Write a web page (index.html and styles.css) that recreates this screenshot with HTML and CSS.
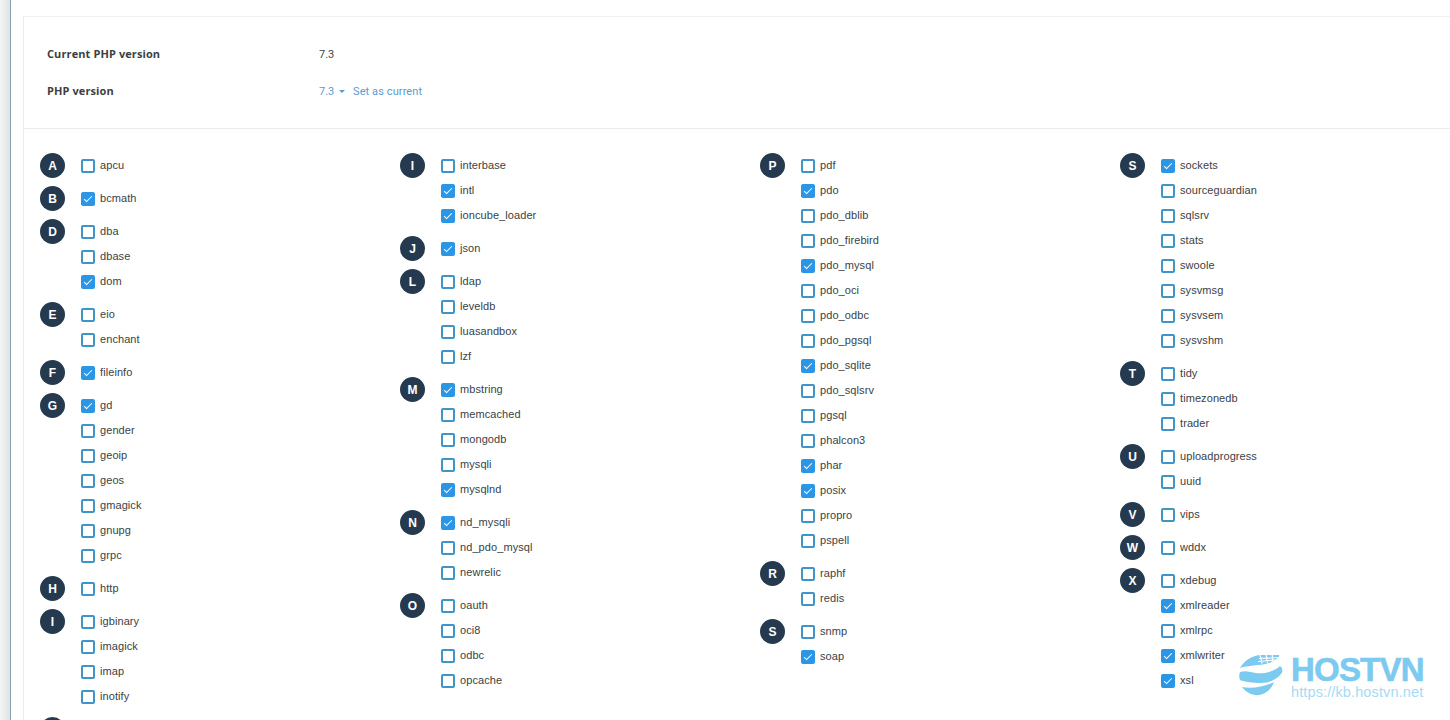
FILE: index.html
```html
<!DOCTYPE html>
<html lang="en">
<head>
<meta charset="UTF-8">
<title>Select PHP version</title>
<link rel="stylesheet" href="styles.css">
</head>
<body>
<div class="page">
  <div class="side-edge"></div>
  <div class="main">
    <div class="card">
      <div class="version-info">
        <div class="info-label">Current PHP version</div>
        <div class="info-value">7.3</div>
        <div class="info-label">PHP version</div>
        <div class="info-value link">7.3 <span class="caret"></span><span class="set-current">Set as current</span></div>
      </div>
      <div class="ext-grid">
        <!-- column 1 -->
        <div class="ext-col">
          <div class="group"><div class="badge">A</div><div class="items">
            <label class="item"><span class="box"></span>apcu</label>
          </div></div>
          <div class="group"><div class="badge">B</div><div class="items">
            <label class="item"><span class="box on"></span>bcmath</label>
          </div></div>
          <div class="group"><div class="badge">D</div><div class="items">
            <label class="item"><span class="box"></span>dba</label>
            <label class="item"><span class="box"></span>dbase</label>
            <label class="item"><span class="box on"></span>dom</label>
          </div></div>
          <div class="group"><div class="badge">E</div><div class="items">
            <label class="item"><span class="box"></span>eio</label>
            <label class="item"><span class="box"></span>enchant</label>
          </div></div>
          <div class="group"><div class="badge">F</div><div class="items">
            <label class="item"><span class="box on"></span>fileinfo</label>
          </div></div>
          <div class="group"><div class="badge">G</div><div class="items">
            <label class="item"><span class="box on"></span>gd</label>
            <label class="item"><span class="box"></span>gender</label>
            <label class="item"><span class="box"></span>geoip</label>
            <label class="item"><span class="box"></span>geos</label>
            <label class="item"><span class="box"></span>gmagick</label>
            <label class="item"><span class="box"></span>gnupg</label>
            <label class="item"><span class="box"></span>grpc</label>
          </div></div>
          <div class="group"><div class="badge">H</div><div class="items">
            <label class="item"><span class="box"></span>http</label>
          </div></div>
          <div class="group"><div class="badge">I</div><div class="items">
            <label class="item"><span class="box"></span>igbinary</label>
            <label class="item"><span class="box"></span>imagick</label>
            <label class="item"><span class="box"></span>imap</label>
            <label class="item"><span class="box"></span>inotify</label>
          </div></div>
          <div class="group"><div class="badge"></div></div>
        </div>
        <!-- column 2 -->
        <div class="ext-col">
          <div class="group"><div class="badge">I</div><div class="items">
            <label class="item"><span class="box"></span>interbase</label>
            <label class="item"><span class="box on"></span>intl</label>
            <label class="item"><span class="box on"></span>ioncube_loader</label>
          </div></div>
          <div class="group"><div class="badge">J</div><div class="items">
            <label class="item"><span class="box on"></span>json</label>
          </div></div>
          <div class="group"><div class="badge">L</div><div class="items">
            <label class="item"><span class="box"></span>ldap</label>
            <label class="item"><span class="box"></span>leveldb</label>
            <label class="item"><span class="box"></span>luasandbox</label>
            <label class="item"><span class="box"></span>lzf</label>
          </div></div>
          <div class="group"><div class="badge">M</div><div class="items">
            <label class="item"><span class="box on"></span>mbstring</label>
            <label class="item"><span class="box"></span>memcached</label>
            <label class="item"><span class="box"></span>mongodb</label>
            <label class="item"><span class="box"></span>mysqli</label>
            <label class="item"><span class="box on"></span>mysqlnd</label>
          </div></div>
          <div class="group"><div class="badge">N</div><div class="items">
            <label class="item"><span class="box on"></span>nd_mysqli</label>
            <label class="item"><span class="box"></span>nd_pdo_mysql</label>
            <label class="item"><span class="box"></span>newrelic</label>
          </div></div>
          <div class="group"><div class="badge">O</div><div class="items">
            <label class="item"><span class="box"></span>oauth</label>
            <label class="item"><span class="box"></span>oci8</label>
            <label class="item"><span class="box"></span>odbc</label>
            <label class="item"><span class="box"></span>opcache</label>
          </div></div>
        </div>
        <!-- column 3 -->
        <div class="ext-col">
          <div class="group"><div class="badge">P</div><div class="items">
            <label class="item"><span class="box"></span>pdf</label>
            <label class="item"><span class="box on"></span>pdo</label>
            <label class="item"><span class="box"></span>pdo_dblib</label>
            <label class="item"><span class="box"></span>pdo_firebird</label>
            <label class="item"><span class="box on"></span>pdo_mysql</label>
            <label class="item"><span class="box"></span>pdo_oci</label>
            <label class="item"><span class="box"></span>pdo_odbc</label>
            <label class="item"><span class="box"></span>pdo_pgsql</label>
            <label class="item"><span class="box on"></span>pdo_sqlite</label>
            <label class="item"><span class="box"></span>pdo_sqlsrv</label>
            <label class="item"><span class="box"></span>pgsql</label>
            <label class="item"><span class="box"></span>phalcon3</label>
            <label class="item"><span class="box on"></span>phar</label>
            <label class="item"><span class="box on"></span>posix</label>
            <label class="item"><span class="box"></span>propro</label>
            <label class="item"><span class="box"></span>pspell</label>
          </div></div>
          <div class="group"><div class="badge">R</div><div class="items">
            <label class="item"><span class="box"></span>raphf</label>
            <label class="item"><span class="box"></span>redis</label>
          </div></div>
          <div class="group"><div class="badge">S</div><div class="items">
            <label class="item"><span class="box"></span>snmp</label>
            <label class="item"><span class="box on"></span>soap</label>
          </div></div>
        </div>
        <!-- column 4 -->
        <div class="ext-col">
          <div class="group"><div class="badge">S</div><div class="items">
            <label class="item"><span class="box on"></span>sockets</label>
            <label class="item"><span class="box"></span>sourceguardian</label>
            <label class="item"><span class="box"></span>sqlsrv</label>
            <label class="item"><span class="box"></span>stats</label>
            <label class="item"><span class="box"></span>swoole</label>
            <label class="item"><span class="box"></span>sysvmsg</label>
            <label class="item"><span class="box"></span>sysvsem</label>
            <label class="item"><span class="box"></span>sysvshm</label>
          </div></div>
          <div class="group"><div class="badge">T</div><div class="items">
            <label class="item"><span class="box"></span>tidy</label>
            <label class="item"><span class="box"></span>timezonedb</label>
            <label class="item"><span class="box"></span>trader</label>
          </div></div>
          <div class="group"><div class="badge">U</div><div class="items">
            <label class="item"><span class="box"></span>uploadprogress</label>
            <label class="item"><span class="box"></span>uuid</label>
          </div></div>
          <div class="group"><div class="badge">V</div><div class="items">
            <label class="item"><span class="box"></span>vips</label>
          </div></div>
          <div class="group"><div class="badge">W</div><div class="items">
            <label class="item"><span class="box"></span>wddx</label>
          </div></div>
          <div class="group"><div class="badge">X</div><div class="items">
            <label class="item"><span class="box"></span>xdebug</label>
            <label class="item"><span class="box on"></span>xmlreader</label>
            <label class="item"><span class="box"></span>xmlrpc</label>
            <label class="item"><span class="box on"></span>xmlwriter</label>
            <label class="item"><span class="box on"></span>xsl</label>
          </div></div>
        </div>
      </div>
    </div>
  </div>
</div>

<!-- watermark over the page -->
<div class="watermark">
  <svg class="wm-globe" width="44" height="44" viewBox="0 0 44 44">
    <path d="M1 14C5 7 12 2 21 1L40 1C41 3 36 7 30 9C20 12 9 11 1 14Z" fill="#7ccaf0"/>
    <path d="M21 1L23 9.500M27 0L28.500 9M33 0L34 7.500M20 4.500L42 3.500M19 7.500L36 6" stroke="#fff" stroke-width="1.200" fill="none"/>
    <path d="M1 18C6 16 12 18 17 19C26 20 36 17 41 12C44 14 44 18 42 20C37 26 30 29 22 29C14 29 6 28 1 26C0 23 0 20 1 18Z" fill="#7ccaf0"/>
    <path d="M3 33C12 35 25 33 35 28C33 34 29 38 24 40C17 43 8 40 3 33Z" fill="#7ccaf0"/>
  </svg>
  <div class="wm-text">
    <div class="wm-name">HOSTVN</div>
    <div class="wm-url">https://kb.hostvn.net</div>
  </div>
</div>
</body>
</html>
```

FILE: styles.css
```css
html, body {
  margin: 0;
  padding: 0;
  height: 720px;
  overflow: hidden;
}
body {
  font-family: "Liberation Sans", Arial, sans-serif;
  font-size: 11px;
  color: #3a3f45;
  background-color: #fff;
}
.page {
  display: flex;
  height: 720px;
}
.side-edge {
  flex: 0 0 10px;
  background: linear-gradient(to right, #f4f5f5, #dfe2e3);
  border-right: 1px solid #8aa3b3;
}
.main {
  flex: 1;
  padding: 16px 0 0 12px;
  min-width: 0;
}
.card {
  border-top: 1px solid #f1f1f1;
  border-left: 1px solid #ececec;
}
.version-info {
  display: grid;
  grid-template-columns: 272px 1fr;
  grid-auto-rows: 37px;
  align-items: center;
  padding: 18px 0 19px 23px;
  border-bottom: 1px solid #ebebeb;
}
.info-label {
  font-family: "Open Sans", sans-serif;
  font-weight: 700;
  font-size: 11px;
  letter-spacing: 0.1px;
  color: #3c3f42;
}
.info-value {
  font-family: Roboto, sans-serif;
  font-size: 11px;
  padding-top: 2px;
  color: #444;
}
.info-value.link {
  color: #5b9bd0;
}
.caret {
  display: inline-block;
  width: 0;
  height: 0;
  margin: 0 0 2px 2px;
  border-left: 3px solid transparent;
  border-right: 3px solid transparent;
  border-top: 3px solid #5b9bd0;
}
.set-current {
  margin-left: 8px;
  letter-spacing: 0.1px;
}
.ext-grid {
  display: grid;
  grid-template-columns: repeat(3, 360px) 1fr;
  padding: 24px 0 0 16px;
}
.group {
  display: flex;
  gap: 16px;
  margin-bottom: 8px;
}
.badge {
  flex: 0 0 25px;
  height: 25px;
  border-radius: 50%;
  background-color: #263a4f;
  color: #fff;
  font-weight: 700;
  font-size: 12px;
  display: flex;
  align-items: center;
  justify-content: center;
}
.item {
  display: flex;
  align-items: flex-start;
  height: 25px;
  line-height: 24px;
  gap: 5px;
  letter-spacing: 0.08px;
}
.box {
  box-sizing: border-box;
  width: 14px;
  height: 14px;
  margin-top: 6px;
  border: 2px solid #3f94c8;
  border-radius: 2px;
  background-color: #fff;
  display: flex;
  align-items: center;
  justify-content: center;
}
.box.on {
  background-color: #2b96e6;
  border-color: #2b96e6;
}
.box.on::after {
  content: "";
  width: 7px;
  height: 3px;
  margin-top: -2px;
  border-left: 1.5px solid #fff;
  border-bottom: 1.5px solid #fff;
  transform: rotate(-45deg);
}
.watermark {
  position: absolute;
  left: 1239px;
  top: 654px;
  display: flex;
  gap: 8px;
}
.wm-globe {
  display: block;
}
.wm-text {
  color: #7ccaf0;
}
.wm-name {
  font-weight: 700;
  font-size: 33px;
  line-height: 28px;
  letter-spacing: -0.8px;
  margin-top: 2px;
  -webkit-text-stroke: 0.6px #7ccaf0;
}
.wm-url {
  font-size: 14.500px;
  line-height: 14px;
  margin-top: 1px;
  letter-spacing: 0.12px;
  color: #a4dbf5;
}
```
